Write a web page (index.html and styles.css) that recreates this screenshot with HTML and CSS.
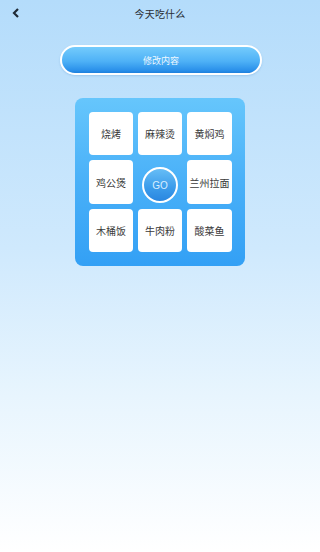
FILE: index.html
```html
<!DOCTYPE html>
<html lang="zh">
<head>
<meta charset="utf-8">
<link rel="stylesheet" href="styles.css">
</head>
<body>
<div class="page">
  <header class="topbar">
    <span class="back">
      <svg width="8" height="10" viewBox="0 0 8 10"><path d="M6 1 L2 5 L6 9" fill="none" stroke="#1f2a36" stroke-width="2.2" stroke-linejoin="miter"/></svg>
    </span>
    <span class="title">今天吃什么</span>
  </header>
  <div class="btn-row">
    <div class="edit-btn">修改内容</div>
  </div>
  <div class="panel">
    <div class="grid">
      <div class="tile">烧烤</div>
      <div class="tile">麻辣烫</div>
      <div class="tile">黄焖鸡</div>
      <div class="tile">鸡公煲</div>
      <div class="center"><div class="go">GO</div></div>
      <div class="tile">兰州拉面</div>
      <div class="tile">木桶饭</div>
      <div class="tile">牛肉粉</div>
      <div class="tile">酸菜鱼</div>
    </div>
  </div>
</div>
</body>
</html>
```
FILE: styles.css
```css
html, body {
  margin: 0;
  padding: 0;
}
body {
  font-family: "Noto Sans CJK SC", "Noto Sans", sans-serif;
}
.page {
  width: 320px;
  height: 552px;
  background: linear-gradient(180deg, #b4dcfb 0%, #cfe9fd 45%, #e8f5fe 72%, #ffffff 100%);
  overflow: hidden;
}
.topbar {
  position: relative;
  height: 26px;
  display: flex;
  align-items: center;
  justify-content: center;
}
.back {
  position: absolute;
  left: 12px;
  top: 8px;
  display: flex;
}
.title {
  font-size: 10px;
  color: #2a2f36;
  letter-spacing: 0.2px;
}
.btn-row {
  padding-top: 19px;
  padding-left: 60px;
}
.edit-btn {
  box-sizing: border-box;
  width: 202px;
  height: 30px;
  border: 2px solid #ffffff;
  border-radius: 15px;
  background: linear-gradient(180deg, #74cbfc 0%, #4eb1f6 55%, #2a90ea 90%, #1f80dc 100%);
  color: #eef8ff;
  font-size: 9px;
  display: flex;
  align-items: center;
  justify-content: center;
  box-shadow: 0 1px 2px rgba(60, 130, 200, 0.25);
}
.panel {
  box-sizing: border-box;
  margin: 23px 0 0 75px;
  width: 170px;
  height: 168px;
  border-radius: 8px;
  background: linear-gradient(180deg, #66c6fc 0%, #49b0f8 50%, #33a0f5 100%);
  padding: 14px 13px 13px 14px;
}
.grid {
  display: grid;
  grid-template-columns: 44px 44px 45px;
  grid-template-rows: 43px 44px 43px;
  column-gap: 5px;
  row-gap: 5px;
}
.tile {
  background: #ffffff;
  border-radius: 4px;
  display: flex;
  align-items: center;
  justify-content: center;
  font-size: 10px;
  color: #3a3a3a;
  white-space: nowrap;
}
.center {
  display: flex;
  align-items: center;
  justify-content: center;
}
.go {
  box-sizing: border-box;
  width: 36px;
  height: 36px;
  margin-top: 6px;
  border-radius: 50%;
  border: 2px solid #ffffff;
  background: linear-gradient(180deg, #66bdf6 0%, #3b9bea 60%, #2a86e0 100%);
  color: #d8eeff;
  font-family: "Liberation Sans", Arial, sans-serif;
  font-size: 10px;
  display: flex;
  align-items: center;
  justify-content: center;
}
```
